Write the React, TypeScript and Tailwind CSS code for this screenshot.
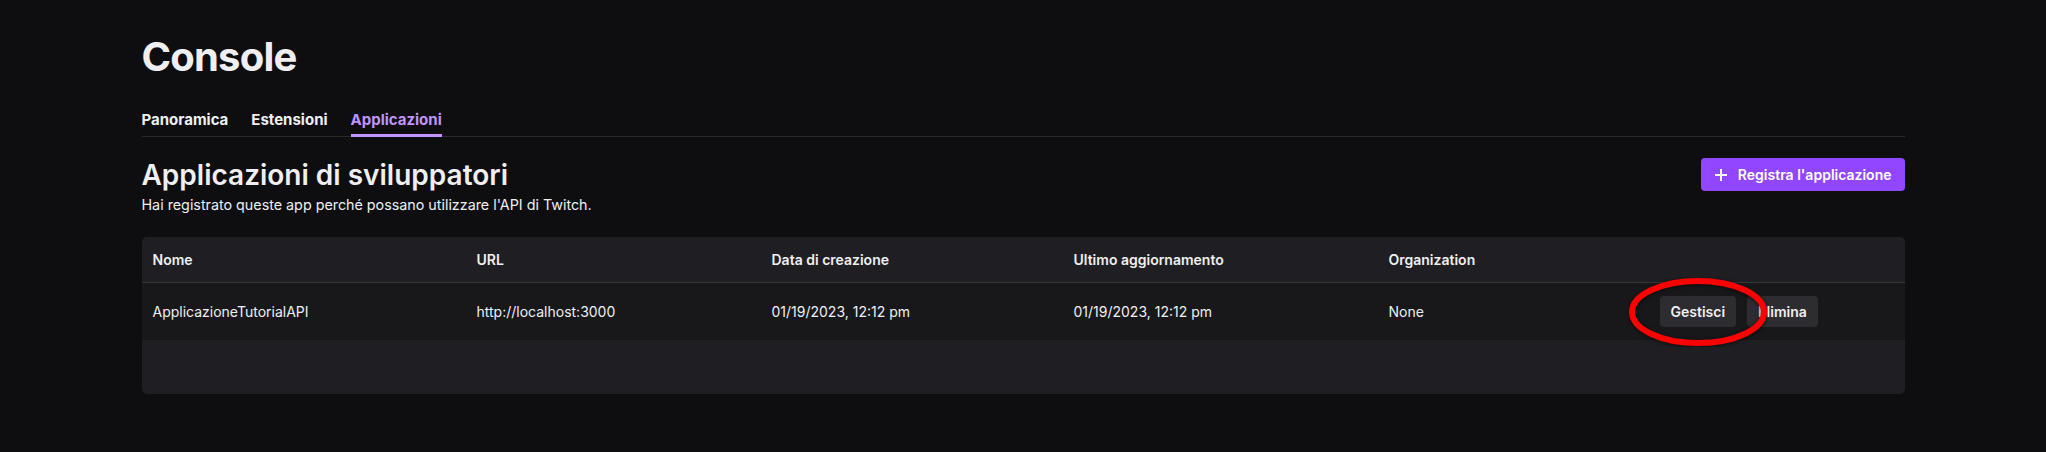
const tabs = [
  { label: 'Panoramica', active: false },
  { label: 'Estensioni', active: false },
  { label: 'Applicazioni', active: true },
];

const columns = [
  'Nome',
  'URL',
  'Data di creazione',
  'Ultimo aggiornamento',
  'Organization',
  '',
];

const gridCols =
  'grid grid-cols-[324px_295px_302px_315px_271px_1fr] items-center';

const apps = [
  {
    name: 'ApplicazioneTutorialAPI',
    url: 'http://localhost:3000',
    created: '01/19/2023, 12:12 pm',
    updated: '01/19/2023, 12:12 pm',
    organization: 'None',
  },
];

const PlusIcon = () => (
  <svg width="14" height="14" viewBox="0 0 14 14" fill="none">
    <path d="M7 1v12M1 7h12" stroke="white" strokeWidth="2" />
  </svg>
);

const App = () => {
  return (
    <div className="min-h-[452px] w-full bg-[#0e0e10] font-['Inter',sans-serif] text-[#efeff1]">
      <div className="mx-auto w-[1763px] pt-[37px]">
        {/* Page title */}
        <h1 className="text-[40px] leading-none font-bold tracking-[-0.8px]">
          Console
        </h1>

        {/* Tabs */}
        <div className="mt-[33px] flex gap-[23px] border-b border-[#2a2a2e]">
          {tabs.map((tab) => (
            <div
              key={tab.label}
              className={`-mb-px border-b-[3px] pb-[4px] text-[15px] leading-5 font-bold ${
                tab.active
                  ? 'border-[#bf94ff] text-[#bf94ff]'
                  : 'border-transparent text-[#efeff1]'
              }`}
            >
              {tab.label}
            </div>
          ))}
        </div>

        {/* Section header */}
        <div className="mt-[21px] flex items-start justify-between">
          <div>
            <h2 className="text-[28px] leading-[34px] font-semibold">
              Applicazioni di sviluppatori
            </h2>
            <p className="mt-[3px] text-[14.3px] leading-5">
              Hai registrato queste app perché possano utilizzare l&apos;API di
              Twitch.
            </p>
          </div>
          <button className="flex h-[33px] items-center gap-[10px] rounded-[4px] bg-[#9147ff] px-[13px] text-[14px] font-semibold text-white">
            <PlusIcon />
            Registra l&apos;applicazione
          </button>
        </div>

        {/* Apps table */}
        <div className="mt-[22px] rounded-[5px] bg-[#1f1f23] text-[14px]">
          <div className={`${gridCols} h-[46px] border-b border-[#35353b]`}>
            {columns.map((col, i) => (
              <div key={i} className="pl-[11px] font-semibold">
                {col}
              </div>
            ))}
          </div>

          {apps.map((app) => (
            <div key={app.name} className={`${gridCols} h-[57px] bg-[#18181b]`}>
              <div className="pl-[11px]">{app.name}</div>
              <div className="pl-[11px]">{app.url}</div>
              <div className="pl-[11px]">{app.created}</div>
              <div className="pl-[11px]">{app.updated}</div>
              <div className="pl-[11px]">{app.organization}</div>
              <div className="relative flex gap-[11px] pl-[11px]">
                <button className="h-[31px] rounded-[4px] bg-[#2c2c31] px-[11px] text-[14px] font-semibold">
                  Gestisci
                </button>
                <button className="h-[31px] rounded-[4px] bg-[#2c2c31] px-[11px] text-[14px] font-semibold">
                  Elimina
                </button>

                {/* red annotation circle drawn over the row */}
                <svg
                  className="pointer-events-none absolute top-[-19px] left-[-21px]"
                  width="140"
                  height="70"
                  viewBox="0 0 140 70"
                >
                  <ellipse
                    cx="70"
                    cy="35"
                    rx="66"
                    ry="31"
                    fill="none"
                    stroke="#ff0000"
                    strokeWidth="6"
                    style={{ filter: 'drop-shadow(0 1px 2px rgba(0,0,0,0.6))' }}
                  />
                </svg>
              </div>
            </div>
          ))}

          <div className="h-[54px]" />
        </div>
      </div>
    </div>
  );
};

export default App;
